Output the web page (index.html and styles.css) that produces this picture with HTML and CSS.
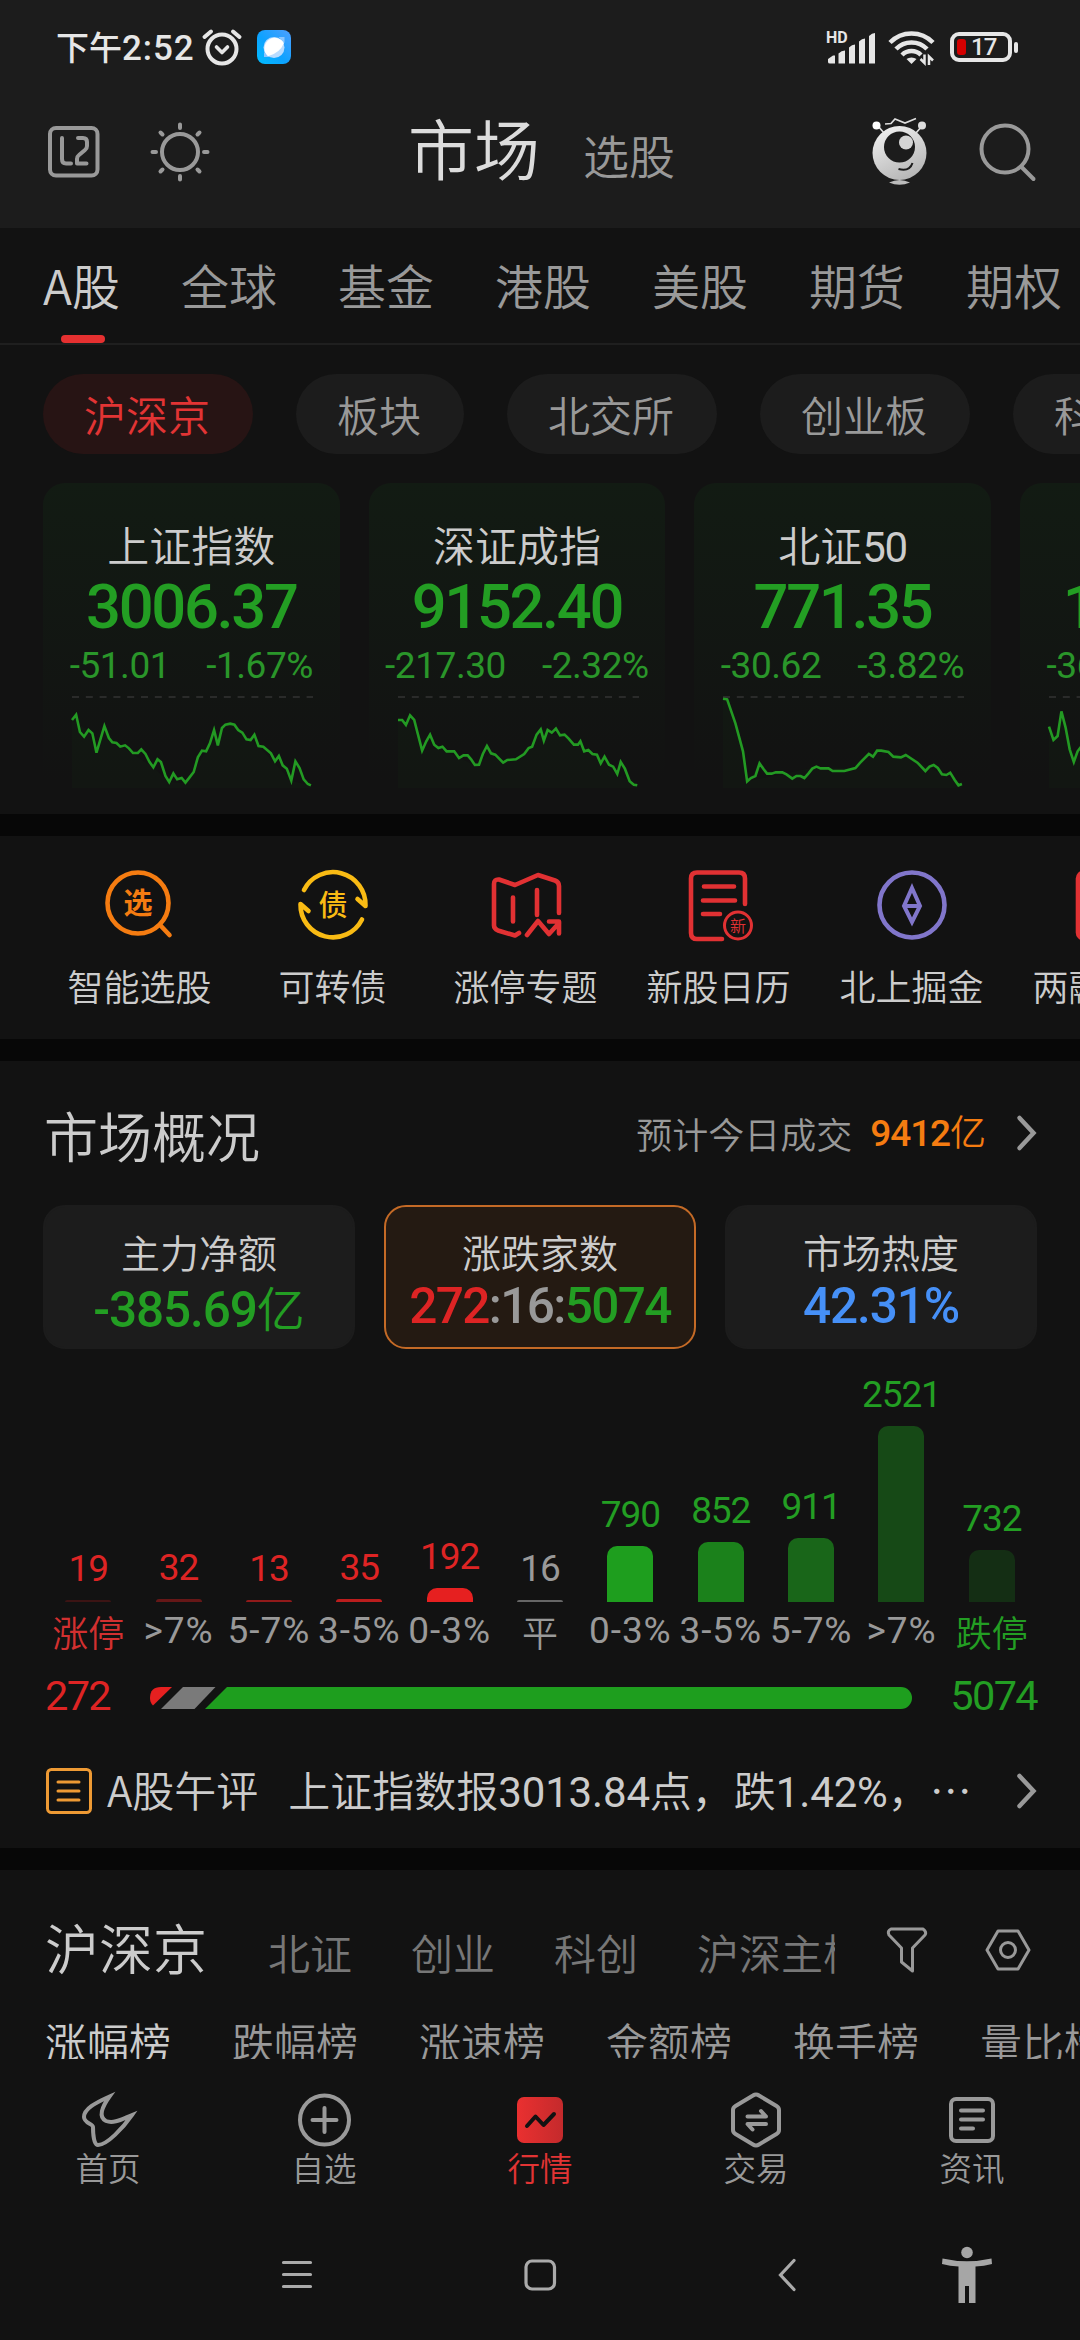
FILE: index.html
```html
<!DOCTYPE html>
<html lang="zh-CN">
<head>
  <meta charset="UTF-8">
  <meta name="viewport" content="width=device-width, initial-scale=1.0">
  <title>市场</title>
  <link rel="stylesheet" href="styles.css">
</head>
<body>
  <div class="phone">
    <header class="top">
      <div class="statusbar">
        <span class="time">下午<span class="clock">2:52</span></span>
        <svg class="alarm" width="40" height="38" viewBox="0 0 40 38" fill="none" stroke="#e6e6e6" stroke-linecap="round">
          <circle cx="20" cy="21" r="14.500" stroke-width="4"/>
          <path d="M2.500 9 L9 3.500 M37.500 9 L31 3.500" stroke-width="4"/>
          <path d="M14.500 19 L20 24.500 L25.500 19" stroke-width="3.600" stroke-linejoin="round"/>
        </svg>
        <svg class="app-dot" width="34" height="34" viewBox="0 0 34 34">
          <defs><linearGradient id="blue" x1="0" y1="1" x2="1" y2="0"><stop offset="0" stop-color="#00bdff"/><stop offset=".45" stop-color="#0da2ff"/><stop offset="1" stop-color="#4f9fff"/></linearGradient></defs>
          <rect width="34" height="34" rx="8" fill="url(#blue)"/>
          <circle cx="17" cy="17.500" r="10.500" fill="#b9dcff"/>
          <path d="M7 27v-5l6 5zM27.500 7h-6l6 6z" fill="#8cc6ff"/>
          <path d="M27 13A10.500 10.500 0 1 0 11 26.200Q23 23 27 13z" fill="#fff"/>
        </svg>
        <div class="status-right">
          <svg width="50" height="34" viewBox="0 0 50 34" fill="#e6e6e6">
            <text x="0" y="13" class="hd">HD</text>
            <path d="M2 32v-3l5-3.500h2v8H4q-2 0-2-1.500zM12.500 33.500V23.500q3-3 6.500-3v13zM23 33.500V17.500q3-3 6-3v19zM33 33.500V11.500q3-3 6-3v25zM43 33.500V6q3-3 6-3v30.500z"/>
          </svg>
          <svg class="wifi" width="48" height="36" viewBox="0 0 48 36" fill="none" stroke="#e6e6e6" stroke-width="4.500">
            <path d="M2 13.500a30 30 0 0 1 43 0M8 20a21.500 21.500 0 0 1 31 0M14 26a13.500 13.500 0 0 1 19 0"/>
            <path d="M23.500 35l-5-5a7 5 0 0 1 10 0z" fill="#e6e6e6" stroke="none"/>
            <path d="M36.500 25.500v8.500l-4-4M41 36v-8.500l4 4" stroke-width="2.500"/>
          </svg>
          <div class="battery"><i></i><b>17</b></div>
          <div class="battery-tip"></div>
        </div>
      </div>
      <div class="titlebar">
        <svg class="l2" width="52" height="52" viewBox="0 0 52 52" fill="none" stroke="#999" stroke-width="4" stroke-linecap="round" stroke-linejoin="round">
          <rect x="2" y="2" width="47.500" height="47.500" rx="6"/>
          <path d="M14 12v21q0 4.500 4 4.500h5M30 12h5q4 0 4 4v4q0 2.500-2 4l-6 5q-2 1.500-2 4v4.500h9.500"/>
        </svg>
        <svg class="sun" width="60" height="60" viewBox="0 0 60 60" fill="none" stroke="#999" stroke-width="4" stroke-linecap="round">
          <circle cx="30" cy="30" r="18"/>
          <path d="M30 2.500v3.500M30 54v3.500M2.500 30h3.500M54 30h3.500M10.500 10.500l2 2M47.500 47.500l2 2M49.500 10.500l-2 2M12.500 47.500l-2 2"/>
        </svg>
        <h1>市场</h1>
        <h2>选股</h2>
        <svg class="robot" width="56" height="68" viewBox="0 0 56 68">
          <defs><linearGradient id="silver" x1=".2" y1="0" x2=".7" y2="1"><stop offset="0" stop-color="#f0f0f0"/><stop offset="1" stop-color="#b4b4b4"/></linearGradient></defs>
          <path d="M13 6l6-.500 4-4.500 10 4 11-4.500M6 8l6 7M50 8l-6 7" fill="none" stroke="#ddd" stroke-width="1.700"/>
          <circle cx="4.500" cy="7.500" r="4" fill="#fff"/><circle cx="50" cy="7.500" r="4" fill="#ddd"/>
          <circle cx="27.500" cy="35" r="27" fill="url(#silver)"/>
          <circle cx="27.500" cy="29" r="15.500" fill="#1c1c1c"/>
          <circle cx="34" cy="24.500" r="7" fill="#d5d5d5"/>
          <path d="M26.500 51q11 3 14-6" fill="none" stroke="#1c1c1c" stroke-width="2"/>
          <path d="M17 64.500q10.500-5 21 0-10.500 4.500-21 0z" fill="#bbb"/>
        </svg>
        <svg width="58" height="60" viewBox="0 0 58 60" fill="none" stroke="#999" stroke-width="4" stroke-linecap="round">
          <circle cx="26" cy="27" r="23.500"/><path d="M42.500 45l12 12"/>
        </svg>
      </div>
    </header>

    <nav class="tabs">
      <span class="on">A股</span><span>全球</span><span>基金</span><span>港股</span><span>美股</span><span>期货</span><span>期权</span>
    </nav>

    <div class="pills">
      <span class="on">沪深京</span><span>板块</span><span>北交所</span><span>创业板</span><span>科创板</span>
    </div>

    <section class="indexes">
      <div class="index">
        <h3>上证指数</h3>
        <div class="price num">3006.37</div>
        <div class="change num"><span>-51.01</span><span>-1.67%</span></div>
        <svg class="spark" viewBox="209 1040 699 276" preserveAspectRatio="none">
          <path class="base" d="M209 1043H908"/>
          <polygon points="209,1112 257,1142 280,1210 303,1130 338,1181 445,1254 491,1298 538,1300 598,1206 654,1126 680,1126 750,1190 845,1294 902,1308 902,1316 209,1316"/>
          <polyline points="209,1112 221,1096 232,1148 244,1162 257,1142 268,1152 280,1210 303,1130 316,1166 326,1179 338,1181 349,1192 363,1188 374,1197 386,1211 400,1211 410,1200 422,1214 434,1238 445,1254 457,1230 467,1238 480,1280 491,1298 503,1272 514,1290 527,1286 538,1300 550,1284 562,1268 574,1224 586,1204 598,1206 609,1182 621,1142 632,1188 644,1136 654,1126 668,1123 680,1126 691,1142 703,1150 715,1170 727,1172 738,1156 750,1190 764,1192 786,1212 798,1236 809,1220 820,1248 832,1258 845,1294 857,1236 869,1256 881,1290 893,1304 902,1308"/>
        </svg>
      </div>
      <div class="index">
        <h3>深证成指</h3>
        <div class="price num">9152.40</div>
        <div class="change num"><span>-217.30</span><span>-2.32%</span></div>
        <svg class="spark" viewBox="1154 1040 699 276" preserveAspectRatio="none">
          <path class="base" d="M1154 1043H1853"/>
          <polygon points="1154,1112 1189,1108 1224,1204 1271,1196 1377,1247 1424,1212 1459,1240 1520,1214 1568,1150 1624,1158 1706,1202 1790,1274 1848,1308 1848,1316 1154,1316"/>
          <polyline points="1154,1112 1166,1112 1177,1127 1189,1098 1201,1112 1212,1156 1224,1204 1236,1176 1247,1156 1259,1186 1271,1196 1283,1192 1295,1206 1317,1206 1331,1226 1344,1218 1356,1218 1366,1230 1377,1247 1389,1246 1400,1214 1412,1190 1424,1212 1436,1216 1459,1240 1471,1232 1496,1230 1520,1214 1533,1196 1543,1192 1556,1156 1568,1140 1577,1174 1588,1142 1600,1150 1612,1138 1624,1158 1637,1156 1649,1168 1664,1186 1676,1186 1683,1176 1694,1206 1706,1202 1718,1214 1731,1216 1742,1242 1753,1222 1766,1246 1778,1252 1790,1274 1800,1238 1812,1258 1826,1296 1838,1306 1848,1308"/>
        </svg>
      </div>
      <div class="index">
        <h3>北证<span class="num">50</span></h3>
        <div class="price num">771.35</div>
        <div class="change num"><span>-30.62</span><span>-3.82%</span></div>
        <svg class="spark" viewBox="532 1040 699 276" preserveAspectRatio="none">
          <path class="base" d="M532 1043H1231"/>
          <polygon points="532,1048 544,1050 568,1122 590,1206 602,1296 803,1252 916,1256 979,1204 1062,1217 1225,1304 1225,1316 532,1316"/>
          <polyline points="532,1048 544,1050 568,1122 590,1206 602,1296 613,1286 626,1280 638,1242 650,1260 660,1273 673,1273 685,1269 704,1269 716,1275 733,1288 745,1280 757,1280 768,1286 780,1272 791,1258 803,1252 815,1257 838,1257 850,1265 884,1265 916,1256 930,1240 955,1214 967,1222 979,1204 991,1204 1012,1208 1026,1222 1048,1224 1062,1217 1096,1240 1119,1265 1131,1252 1143,1247 1155,1256 1167,1275 1180,1277 1191,1270 1204,1292 1215,1308 1225,1304"/>
        </svg>
      </div>
      <div class="index">
        <h3>创业板指</h3>
        <div class="price num">1755.88</div>
        <div class="change num"><span>-36.57</span><span>-2.04%</span></div>
        <svg class="spark" viewBox="1475 1040 699 276" preserveAspectRatio="none">
          <path class="base" d="M1475 1043H2174"/>
          <polygon points="1475,1132 1488,1172 1500,1160 1511,1086 1547,1238 1568,1192 1660,1240 1660,1316 1475,1316"/>
          <polyline points="1475,1132 1488,1172 1500,1160 1511,1086 1523,1134 1535,1200 1547,1238 1558,1206 1568,1192 1580,1210 1600,1200 1660,1240"/>
        </svg>
      </div>
    </section>

    <section class="shortcuts">
      <div>
        <svg width="72" height="72" viewBox="0 0 72 72" fill="none" stroke="#f57c11" stroke-width="4.600" stroke-linecap="round">
          <circle cx="34" cy="35" r="30.500"/><path d="M57 58l8.500 9"/>
          <text x="34" y="45.500" font-size="29" font-weight="700" fill="#f57c11">选</text>
        </svg>
        智能选股
      </div>
      <div>
        <svg width="72" height="72" viewBox="0 0 72 72" fill="none" stroke="#f9bb14" stroke-width="4.600" stroke-linecap="round" stroke-linejoin="round">
          <path d="M7 22a32.500 32.500 0 0 1 61.500 16l-8-7M65 51.500A32.500 32.500 0 0 1 3.500 36l8 7"/>
          <text x="36" y="47.500" font-size="29" font-weight="500" fill="#f9bb14">债</text>
        </svg>
        可转债
      </div>
      <div>
        <svg width="72" height="72" viewBox="1 0 72 72" fill="none" stroke="#e13133" stroke-width="4.600" stroke-linecap="round" stroke-linejoin="round">
          <path d="M30 65l-4 2.500-17-5q-4-2-4-5V16q0-5 5-4.500l16 5.500 23-10 17 5.500q4 1.500 4 5.500v27M24 29.500v24M48 22v25M38 67l11-14 11 13 10-11M60 53.500h10v12"/>
        </svg>
        涨停专题
      </div>
      <div>
        <svg width="72" height="72" viewBox="-2 0 72 72" fill="none" stroke="#e13133" stroke-width="4.600" stroke-linecap="round" stroke-linejoin="round">
          <path d="M37 71H12q-6 0-6-6V10.500q0-6 6-6h42q6 0 6 6V36M19 18.500h30M18 32.500h32M18 46h17"/>
          <circle cx="53" cy="57.500" r="13.500" stroke-width="3"/>
          <text x="53" y="63.500" font-size="16" fill="#e13133">新</text>
        </svg>
        新股日历
      </div>
      <div>
        <svg width="72" height="72" viewBox="0 0 72 72" fill="none" stroke="#8176cb" stroke-width="4.600">
          <circle cx="36" cy="37" r="32.500"/>
          <path d="M36 20l8 18-8 16-8-16zM29 38h14" stroke-width="4"/>
        </svg>
        北上掘金
      </div>
      <div>
        <svg width="72" height="72" viewBox="0 0 72 72" fill="none" stroke="#e13133" stroke-width="4.600">
          <rect x="9" y="4.500" width="56" height="66" rx="6"/>
        </svg>
        两融专题
      </div>
    </section>

    <section class="overview">
      <div class="overview-head">
        <h2>市场概况</h2>
        <span class="expect">预计今日成交</span>
        <span class="amount"><span class="num">9412</span>亿</span>
        <svg width="20" height="36" viewBox="0 0 20 36" class="arrow"><path d="M2.500 3l14 15-14 15"/></svg>
      </div>
      <div class="stats">
        <div class="stat"><h3>主力净额</h3><p class="down"><span class="num">-385.69</span>亿</p></div>
        <div class="stat active"><h3>涨跌家数</h3><p class="num ratio-text"><span class="up">272</span>:16:<span class="down">5074</span></p></div>
        <div class="stat"><h3>市场热度</h3><p class="heat num">42.31%</p></div>
      </div>
      <div class="bars num" id="bars"></div>
      <div class="ratio">
        <span class="up num">272</span>
        <svg width="762" height="22" viewBox="0 0 762 22">
          <path d="M3 18.500Q0 16 0 11Q0 0 11 0H22z" fill="#e62020"/>
          <path d="M33 0H65.500L44.500 22H11z" fill="#7a7a7a"/>
          <path d="M77 0H751a11 11 0 0 1 0 22H55z" fill="#1e9e1e"/>
        </svg>
        <span class="down num">5074</span>
      </div>
      <div class="news">
        <svg width="46" height="46" viewBox="0 0 46 46" fill="none" stroke="#ee9a34" stroke-width="3" stroke-linecap="round">
          <rect x="1.500" y="1.500" width="43" height="43" rx="4"/>
          <path d="M12 14h21M12 23h21M12 32h21"/>
        </svg>
        <span class="tag">A股午评</span>
        <span class="headline">上证指数报<span class="num">3013.84</span>点，跌<span class="num">1.42%</span>，</span>
        <span class="dots">⋯</span>
        <svg width="20" height="36" viewBox="0 0 20 36" class="arrow"><path d="M2.500 3l14 15-14 15"/></svg>
      </div>
    </section>

    <section class="ranking">
      <div class="markets">
        <div class="market-list"><b>沪深京</b><span>北证</span><span>创业</span><span>科创</span><span>沪深主板</span></div>
        <svg width="42" height="46" viewBox="0 0 42 46" fill="none" stroke="#999" stroke-width="3" stroke-linejoin="round">
          <path d="M5 2H37q4 3 2 6L26.500 21V44L15.500 35V21L3 8q-2-4 2-6z"/>
        </svg>
        <svg width="46" height="42" viewBox="0 0 46 42" fill="none" stroke="#999" stroke-width="3" stroke-linejoin="round">
          <path d="M13 2H33L44 21 33 40H13L2 21z"/><circle cx="23" cy="21" r="7.500"/>
        </svg>
      </div>
      <div class="ranks"><b>涨幅榜</b><span>跌幅榜</span><span>涨速榜</span><span>金额榜</span><span>换手榜</span><span>量比榜</span></div>
    </section>

    <nav class="bottom">
      <div>
        <svg width="60" height="60" viewBox="0 0 60 60" fill="none" stroke="#999" stroke-width="4">
          <path d="M31.500 6.500C17 13 6 19 6 27c0 6 9 7 9 10 0 8 1 18 5 18 9 0 25-17 34-30-10 4-18 9-26 6C20 27 24 17 31.500 6.500z"/>
        </svg>首页
      </div>
      <div>
        <svg width="60" height="60" viewBox="0 0 60 60" fill="none" stroke="#999" stroke-width="4" stroke-linecap="round">
          <circle cx="30.500" cy="30" r="24.500"/><path d="M30.500 18v24M18.500 30h24"/>
        </svg>自选
      </div>
      <div class="on">
        <svg width="60" height="60" viewBox="0 0 60 60" fill="none">
          <defs><linearGradient id="red"><stop offset="0" stop-color="#ea3030"/><stop offset="1" stop-color="#c42a2c"/></linearGradient></defs>
          <rect x="7" y="7" width="46" height="46" rx="7" fill="url(#red)"/>
          <path d="M17 36l8.500-9.500 8 8.500 10.500-11" stroke="#121212" stroke-width="4" stroke-linecap="round" stroke-linejoin="round"/>
        </svg>行情
      </div>
      <div>
        <svg width="60" height="60" viewBox="0 0 60 60" fill="none" stroke="#999" stroke-width="4" stroke-linecap="round" stroke-linejoin="round">
          <path d="M27 5.500q3-2 6 0l17.500 10.500q2.500 1.500 2.500 4v20q0 2.500-2.500 4L33 54.500q-3 2-6 0L9.500 44q-2.500-1.500-2.500-4V20q0-2.500 2.500-4z"/>
          <path d="M21.500 26.500h18.500l-5-5.500M40 34H21.500l5 5.500"/>
        </svg>交易
      </div>
      <div>
        <svg width="60" height="60" viewBox="0 0 60 60" fill="none" stroke="#999" stroke-width="4" stroke-linecap="round">
          <rect x="9" y="9" width="42" height="42" rx="5"/><path d="M19 20.500h22M19 29.500h22M19 38.500h12"/>
        </svg>资讯
      </div>
    </nav>

    <div class="sysnav">
      <svg width="30" height="32" viewBox="0 0 30 32"><path d="M1.500 3.500h27M1.500 15.500h27M1.500 27.500h27"/></svg>
      <svg width="32" height="32" viewBox="0 0 32 32"><rect x="2" y="2" width="28.500" height="28" rx="6"/></svg>
      <svg width="18" height="32" viewBox="0 0 18 32"><path d="M16 1.500L2.500 16 16 30.500"/></svg>
      <svg class="person" width="50" height="58" viewBox="0 0 50 58">
        <circle cx="25" cy="6.500" r="5.800"/>
        <path d="M.500 12.500q24.500 5.500 49 0L50 18q-8 2-16.500 2.500V57H27V40h-4v17h-6.500V20.500Q8 20 0 18z"/>
      </svg>
    </div>
  </div>
  <script>
    // label, count, bar height, bar colour, text class
    const data = [
      ["涨停", 19, 2, "rgba(230,32,32,.2)", "up"],
      [">7%", 32, 3, "rgba(230,32,32,.4)", "up"],
      ["5-7%", 13, 2, "rgba(230,32,32,.6)", "up"],
      ["3-5%", 35, 3, "rgba(230,32,32,.8)", "up"],
      ["0-3%", 192, 14, "#e62020", "up"],
      ["平", 16, 2, "#666", "flat"],
      ["0-3%", 790, 56, "#1e9e1e", "down"],
      ["3-5%", 852, 60, "rgba(30,158,30,.8)", "down"],
      ["5-7%", 911, 64, "rgba(30,158,30,.6)", "down"],
      [">7%", 2521, 176, "rgba(30,158,30,.4)", "down"],
      ["跌停", 732, 52, "rgba(30,158,30,.2)", "down"]
    ];
    document.getElementById("bars").innerHTML = data.map(([label, count, h, color, cls]) => `
      <div class="col">
        <span class="count ${cls}">${count}</span>
        <i style="height:${h}px;background:${color}"></i>
        <span class="label ${label.endsWith("%") ? "" : "word " + cls}">${label}</span>
      </div>`).join("");
  </script>
</body>
</html>
```
FILE: styles.css
```css
* { box-sizing: border-box; }
html, body {
  margin: 0;
  padding: 0;
  background: #070707;
}
body {
  font-family: "Noto Sans CJK SC", sans-serif;
  font-weight: 350;
  color: #ccc;
}
h1, h2, h3, p, b {
  margin: 0;
  font-weight: inherit;
}
svg {
  display: block;
  flex: none;
  overflow: visible;
}
span, b, h1, h2, h3, p { white-space: nowrap; }
.phone {
  width: 1080px;
  height: 2340px;
  overflow: hidden;
}
.num {
  font-family: Roboto, "Noto Sans CJK SC", sans-serif;
  font-weight: 500;
  letter-spacing: -.03em;
}
.up { color: #de2424; }
.down { color: #239e23; }
.flat { color: #999; }
.arrow {
  fill: none;
  stroke: #999;
  stroke-width: 4.5;
  stroke-linecap: round;
}

/* status bar and title */
.top {
  height: 228px;
  background: #1c1c1c;
}
.statusbar {
  height: 94px;
  display: flex;
  align-items: center;
  padding-left: 56px;
}
.time {
  font-size: 33px;
  line-height: 48px;
  font-weight: 500;
  color: #e6e6e6;
}
.clock {
  font-family: Roboto, sans-serif;
  font-size: 35px;
  letter-spacing: .9px;
}
.alarm { margin-left: 7px; }
.app-dot { margin-left: 15px; }
.status-right {
  display: flex;
  align-items: center;
  margin-left: auto;
  padding-right: 62px;
}
.hd {
  font: 700 16px Roboto, sans-serif;
}
.wifi { margin: 0 14px 0 12px; }
.battery {
  width: 62px;
  height: 30px;
  border: 4px solid #e6e6e6;
  border-radius: 9px;
  display: flex;
  align-items: center;
  padding-left: 3px;
}
.battery i {
  width: 9px;
  height: 16px;
  border-radius: 3px;
  background: #d40000;
}
.battery b {
  margin-left: 5px;
  font: 500 24px/24px Roboto, sans-serif;
  letter-spacing: -1px;
  color: #e6e6e6;
}
.battery-tip {
  width: 4px;
  height: 11px;
  margin-left: 2px;
  border-radius: 2px;
  background: #e6e6e6;
}
.titlebar {
  height: 116px;
  display: flex;
  align-items: center;
  padding-left: 48px;
}
.sun { margin-left: 50px; }
.titlebar h1 {
  margin: -12px 0 0 198px;
  font-size: 66px;
  line-height: 80px;
  color: #dcdcdc;
}
.titlebar h2 {
  margin: 3px 0 0 43px;
  font-size: 46px;
  line-height: 60px;
  color: #999;
}
.robot { margin: 0 51px 0 197px; }

/* tabs */
.tabs {
  height: 117px;
  display: flex;
  gap: 61px;
  padding-left: 43px;
  border-bottom: 2px solid #1f1f1f;
  background: #121212;
  font-size: 48px;
  line-height: 112px;
  color: #999;
}
.tabs span { flex: none; }
.tabs .on {
  color: #ccc;
  display: flex;
  flex-direction: column;
  align-items: center;
}
.tabs .on::after {
  content: "";
  width: 44px;
  height: 8px;
  margin: -5px 0 0 3px;
  border-radius: 4px;
  background: #e53030;
}
.pills {
  display: flex;
  gap: 43px;
  padding: 29px 0 0 43px;
  height: 138px;
  background: #121212;
}
.pills span {
  flex: none;
  height: 80px;
  padding: 0 43px 0 41px;
  border-radius: 40px;
  background: #1c1c1c;
  font-size: 42px;
  line-height: 80px;
  color: #999;
}
.pills .on {
  background: #271414;
  color: #e23434;
}

/* index cards */
.indexes {
  display: flex;
  gap: 29px;
  height: 331px;
  padding-left: 43px;
  background: #121212;
}
.index {
  flex: none;
  width: 296.6px;
  height: 297px;
  padding-top: 36px;
  border-radius: 22px 22px 0 0;
  background: linear-gradient(#121b13, #121212);
  text-align: center;
}
.index h3 {
  font-size: 42px;
  line-height: 50px;
  height: 50px;
}
.index h3 .num { font-weight: 450; }
.price {
  font-size: 61.5px;
  line-height: 76px;
  letter-spacing: -.038em;
  color: #239e23;
}
.change {
  display: flex;
  justify-content: center;
  gap: 36px;
  font-size: 37px;
  line-height: 44px;
  margin-top: -1px;
  font-weight: 450;
  letter-spacing: -.012em;
  color: #2a962a;
}
.spark {
  width: 241px;
  height: 92px;
  margin: 8px 0 0 29px;
}
.spark polyline {
  fill: none;
  stroke: #239a23;
  stroke-width: 2.6;
  vector-effect: non-scaling-stroke;
}
.spark polygon { fill: rgba(30, 158, 30, .03); }
.base {
  stroke: #333;
  stroke-width: 1.5;
  stroke-dasharray: 7 6.8;
  vector-effect: non-scaling-stroke;
}

/* shortcuts */
.shortcuts {
  display: flex;
  height: 203px;
  margin: 22px 0;
  padding: 32px 0 0 43px;
  background: #121212;
  font-size: 36px;
  line-height: 50px;
}
.shortcuts div {
  flex: none;
  width: 193px;
  display: flex;
  flex-direction: column;
  align-items: center;
  gap: 20px;
  white-space: nowrap;
}
.shortcuts text {
  font-family: "Noto Sans CJK SC", sans-serif;
  text-anchor: middle;
  stroke: none;
}

/* overview */
.overview {
  height: 787px;
  padding: 0 43px;
  background: #121212;
}
.overview-head {
  display: flex;
  align-items: center;
  height: 144px;
}
.overview-head h2 {
  margin: 2px auto 0 1px;
  font-size: 54px;
}
.expect {
  font-size: 36px;
  color: #999;
}
.amount {
  margin: 0 31px 6px 18px;
  font-size: 36px;
  color: #f57c11;
}
.amount .num { font-size: 37px; }
.stats {
  display: grid;
  grid-template-columns: repeat(3, 1fr);
  gap: 29px;
}
.stat {
  height: 144px;
  padding-top: 19px;
  border: 2px solid #1c1c1c;
  border-radius: 22px;
  background: #1c1c1c;
  text-align: center;
}
.stat.active {
  border-color: #c46a26;
  background: #241a12;
}
.stat h3 {
  font-size: 39px;
  line-height: 50px;
}
.stat p {
  font-size: 48px;
  line-height: 60px;
}
.stat .num {
  font-size: 49.5px;
  letter-spacing: -.022em;
}
.stat .ratio-text, .ratio-text span {
  letter-spacing: -.033em;
}
.ratio-text { color: #999; }
.heat { color: #4690f7; }
.bars {
  display: grid;
  grid-template-columns: repeat(11, 1fr);
  align-items: end;
  height: 303px;
  font-size: 37px;
  font-weight: 450;
}
.col {
  display: flex;
  flex-direction: column;
  align-items: center;
}
.count {
  line-height: 44px;
  margin-bottom: 9px;
}
.col i {
  width: 46px;
  border-radius: 10px 10px 0 0;
}
.label {
  height: 50px;
  line-height: 58px;
  letter-spacing: .025em;
  color: #999;
}
.word {
  font-family: "Noto Sans CJK SC", sans-serif;
  font-size: 36px;
  font-weight: 350;
  letter-spacing: 0;
}
.label.up { color: #d33030; }
.label.down { color: #239e23; }
.ratio {
  display: flex;
  align-items: center;
  height: 90px;
  font-size: 41.5px;
}
.ratio svg { margin-top: 2px; }
.ratio .num {
  width: 107px;
  padding: 0 0 3px 2px;
  font-weight: 450;
  letter-spacing: -.04em;
}
.ratio .down {
  width: 125px;
  text-align: right;
}
.news {
  display: flex;
  align-items: center;
  height: 98px;
  padding-left: 3px;
  font-size: 42px;
}
.news span { margin-bottom: 5px; }
.news .tag { margin: 0 30px 5px 15px; }
.headline .num {
  font-weight: 450;
  letter-spacing: -.004em;
}
.news .arrow { margin-left: auto; }

/* ranking */
.ranking {
  height: 189px;
  margin-top: 22px;
  background: #121212;
  overflow: hidden;
}
.markets {
  display: flex;
  align-items: center;
  height: 146px;
  padding: 13px 0 0 45px;
}
.market-list {
  width: 790px;
  margin: 0 51px 6px 0;
  overflow: hidden;
  display: flex;
  align-items: baseline;
  gap: 59px;
  font-size: 42px;
  color: #777;
}
.market-list b {
  flex: none;
  margin-right: 2px;
  font-size: 54px;
  color: #ccc;
}
.market-list span { flex: none; }
.markets svg + svg { margin-left: 57px; }
.ranks {
  display: flex;
  gap: 61px;
  padding-left: 45px;
  font-size: 42px;
  line-height: 50px;
  color: #999;
}
.ranks span, .ranks b { flex: none; }
.ranks b { color: #ccc; }

/* bottom bars */
.bottom {
  display: grid;
  grid-template-columns: repeat(5, 1fr);
  height: 151px;
  padding-top: 31px;
  background: #121212;
  font-size: 32.5px;
  line-height: 34px;
  color: #999;
}
.bottom div {
  display: flex;
  flex-direction: column;
  align-items: center;
}
.bottom .on { color: #e23434; }
.sysnav {
  display: flex;
  align-items: center;
  height: 130px;
  padding-left: 282px;
  background: #121212;
  fill: none;
  stroke: #aaa;
  stroke-width: 3.2;
  stroke-linecap: round;
}
.sysnav svg:nth-child(2) { margin-left: 212px; }
.sysnav svg:nth-child(3) { margin-left: 222px; }
.person {
  margin-left: 146px;
  fill: #a6a6a6;
  stroke: none;
}
```
